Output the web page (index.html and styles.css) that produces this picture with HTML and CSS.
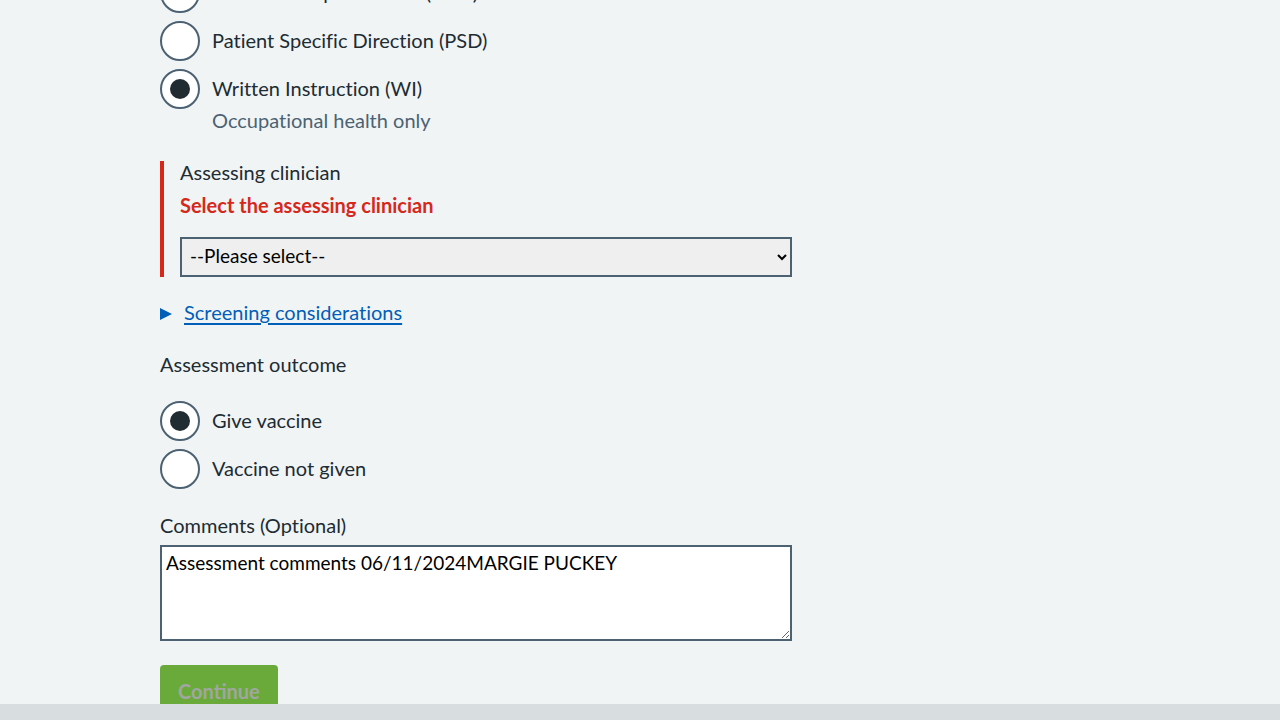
FILE: index.html
```html
<!DOCTYPE html>
<html lang="en">
<head>
<meta charset="utf-8">
<title>Assessment</title>
<link rel="stylesheet" href="styles.css">
</head>
<body>
<main class="container">
  <div class="radios radios-first">
    <div class="radio-item">
      <span class="radio-box"></span>
      <label class="radio-label">Patient Group Direction (PGD)</label>
    </div>
    <div class="radio-item">
      <span class="radio-box"></span>
      <label class="radio-label">Patient Specific Direction (PSD)</label>
    </div>
    <div class="radio-item radio-item-hinted">
      <span class="radio-box radio-checked"></span>
      <div class="radio-text">
        <label class="radio-label radio-label-tight">Written Instruction (WI)</label>
        <div class="hint">Occupational health only</div>
      </div>
    </div>
  </div>

  <div class="error-group">
    <label class="field-label">Assessing clinician</label>
    <div class="error-message">Select the assessing clinician</div>
    <select class="select">
      <option>--Please select--</option>
    </select>
  </div>

  <div class="details">
    <span class="details-arrow"></span>
    <a class="details-link" href="#">Screening considerations</a>
  </div>

  <div class="legend">Assessment outcome</div>

  <div class="radios radios-outcome">
    <div class="radio-item">
      <span class="radio-box radio-checked"></span>
      <label class="radio-label">Give vaccine</label>
    </div>
    <div class="radio-item">
      <span class="radio-box"></span>
      <label class="radio-label">Vaccine not given</label>
    </div>
  </div>

  <label class="field-label comments-label">Comments (Optional)</label>
  <textarea class="textarea">Assessment comments 06/11/2024MARGIE PUCKEY</textarea>

  <button class="button" type="button">Continue</button>
</main>
<div class="bottom-bar"></div>
</body>
</html>
```
FILE: styles.css
```css
html, body {
  margin: 0;
  padding: 0;
  background: #f0f4f5;
  overflow: hidden;
}
body {
  font-family: Lato, "Noto Sans", sans-serif;
  font-size: 20px;
  line-height: 28px;
  color: #212b32;
  font-variant-ligatures: none;
}
.container {
  width: 960px;
  margin: -27px auto 0;
}
.radios {
  display: flex;
  flex-direction: column;
  gap: 8px;
}
.radio-item {
  display: flex;
  align-items: flex-start;
  min-height: 40px;
}
.radio-box {
  box-sizing: border-box;
  width: 40px;
  height: 40px;
  flex: none;
  border: 2px solid #4c6272;
  border-radius: 50%;
  background: #fff;
  display: flex;
  align-items: center;
  justify-content: center;
}
.radio-checked::after {
  content: "";
  width: 20px;
  height: 20px;
  border-radius: 50%;
  background: #212b32;
}
.radio-label {
  padding: 5px 12px 7px;
}
.radio-text {
  display: flex;
  flex-direction: column;
}
.radio-label-tight {
  padding-bottom: 4px;
}
.hint {
  color: #4c6272;
  padding-left: 12px;
}
.radios-first {
  margin-bottom: 27px;
}
.error-group {
  border-left: 4px solid #d5281b;
  padding-left: 16px;
  display: flex;
  flex-direction: column;
  align-items: flex-start;
}
.field-label {
  display: block;
  margin-top: -3px;
}
.error-message {
  color: #d5281b;
  font-weight: bold;
  margin-top: 5px;
  margin-bottom: 18px;
}
.select {
  box-sizing: border-box;
  width: 612px;
  height: 40px;
  border: 2px solid #4c6272;
  border-radius: 0;
  background-color: #efefef;
  font-family: Lato, "Noto Sans", sans-serif;
  font-size: 19px;
  color: #000;
  padding: 0 4px 4px;
}
.details {
  display: flex;
  align-items: center;
  gap: 12px;
  margin-top: 21px;
}
.details-arrow {
  width: 0;
  height: 0;
  border-top: 6px solid transparent;
  border-bottom: 6px solid transparent;
  border-left: 12px solid #005eb8;
  margin-top: 4px;
}
.details-link {
  color: #005eb8;
  text-decoration: underline;
  text-underline-offset: 3px;
}
.legend {
  margin-top: 24px;
  margin-bottom: 23px;
}
.radios-outcome {
  margin-bottom: 22px;
}
.comments-label {
  margin-top: 0;
  margin-bottom: 6px;
}
.textarea {
  display: block;
  box-sizing: border-box;
  width: 632px;
  height: 96px;
  border: 2px solid #4c6272;
  border-radius: 0;
  background: #fff;
  font-family: Lato, "Noto Sans", sans-serif;
  font-size: 19px;
  line-height: 24px;
  color: #000;
  padding: 4px 4px;
  margin: 0;
}
.button {
  margin-top: 24px;
  background: #6aaa3a;
  color: #a1a6a1;
  border: none;
  border-radius: 4px;
  font-family: Lato, "Noto Sans", sans-serif;
  font-size: 20px;
  font-weight: bold;
  line-height: 28px;
  padding: 12px 18px;
}
.bottom-bar {
  position: fixed;
  left: 0;
  right: 0;
  bottom: 0;
  height: 16px;
  background: #d8dde0;
}
```
